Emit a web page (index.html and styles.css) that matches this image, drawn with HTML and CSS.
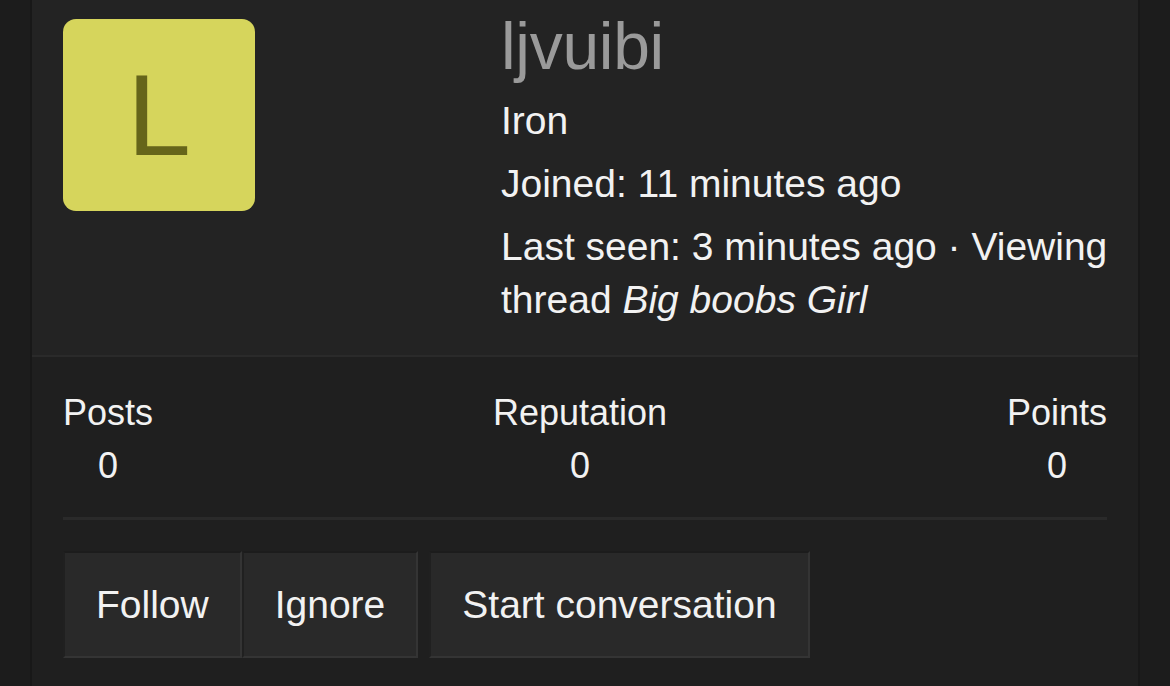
FILE: index.html
```html
<!DOCTYPE html>
<html lang="en">
<head>
    <meta charset="UTF-8">
    <meta name="viewport" content="width=device-width, initial-scale=1.0">
    <title>ljvuibi - Member</title>
    <link rel="stylesheet" href="styles.css">
</head>
<body>
    <div class="card">
        <div class="profile">
            <div class="avatar-col">
                <div class="avatar">L</div>
            </div>
            <div class="info">
                <h1 class="username">ljvuibi</h1>
                <p class="line">Iron</p>
                <p class="line">Joined: 11 minutes ago</p>
                <p class="line">Last seen: 3 minutes ago · Viewing thread <em>Big boobs Girl</em></p>
            </div>
        </div>
        <div class="lower">
            <div class="stats">
                <div class="stat">
                    <div class="stat-label">Posts</div>
                    <div class="stat-value">0</div>
                </div>
                <div class="stat">
                    <div class="stat-label">Reputation</div>
                    <div class="stat-value">0</div>
                </div>
                <div class="stat">
                    <div class="stat-label">Points</div>
                    <div class="stat-value">0</div>
                </div>
            </div>
            <div class="actions">
                <div class="button-group">
                    <button class="button">Follow</button>
                    <button class="button">Ignore</button>
                </div>
                <button class="button">Start conversation</button>
            </div>
        </div>
    </div>
</body>
</html>
```

FILE: styles.css
```css
body {
    background-color: #1c1c1c;
    font-family: 'Liberation Sans', Arial, sans-serif;
    color: #f2f2f2;
    margin: 0;
    padding: 0 30px;
    height: 686px;
    overflow: hidden;
}
.card {
    background-color: #232323;
    border-left: 2px solid #181818;
    border-right: 2px solid #181818;
    height: 100%;
    display: flex;
    flex-direction: column;
}
.profile {
    display: flex;
    padding: 19px 20px 29px 31px;
}
.avatar-col {
    width: 438px;
    flex-shrink: 0;
}
.avatar {
    width: 192px;
    height: 192px;
    border-radius: 13px;
    background-color: #d6d55c;
    color: #66651a;
    font-size: 115px;
    line-height: 192px;
    text-align: center;
}
.info {
    flex: 1;
    min-width: 0;
}
.username {
    margin: 0 0 21px;
    font-size: 66px;
    font-weight: normal;
    line-height: 54px;
    letter-spacing: -0.3px;
    color: #9a9a9a;
}
.line {
    margin: 0 0 10px;
    font-size: 39px;
    line-height: 53px;
}
.line:last-child {
    margin-bottom: 0;
}
.lower {
    flex: 1;
    background-color: #1f1f1f;
    border-top: 2px solid #2a2a2a;
    padding: 0 31px;
}
.stats {
    display: flex;
    justify-content: space-between;
    padding: 29px 0 25px;
    border-bottom: 3px solid #2a2a2a;
}
.stat {
    text-align: center;
    font-size: 36px;
    line-height: 53px;
}
.actions {
    display: flex;
    gap: 11px;
    padding-top: 31px;
}
.button-group {
    display: flex;
}
.button {
    height: 107px;
    padding: 0 31px;
    background-color: #292929;
    color: #f2f2f2;
    font-family: 'Liberation Sans', Arial, sans-serif;
    font-size: 39px;
    border-top: 2px solid #1c1c1c;
    border-left: 2px solid #202020;
    border-right: 2px solid #343434;
    border-bottom: 2px solid #343434;
    cursor: pointer;
}
```
